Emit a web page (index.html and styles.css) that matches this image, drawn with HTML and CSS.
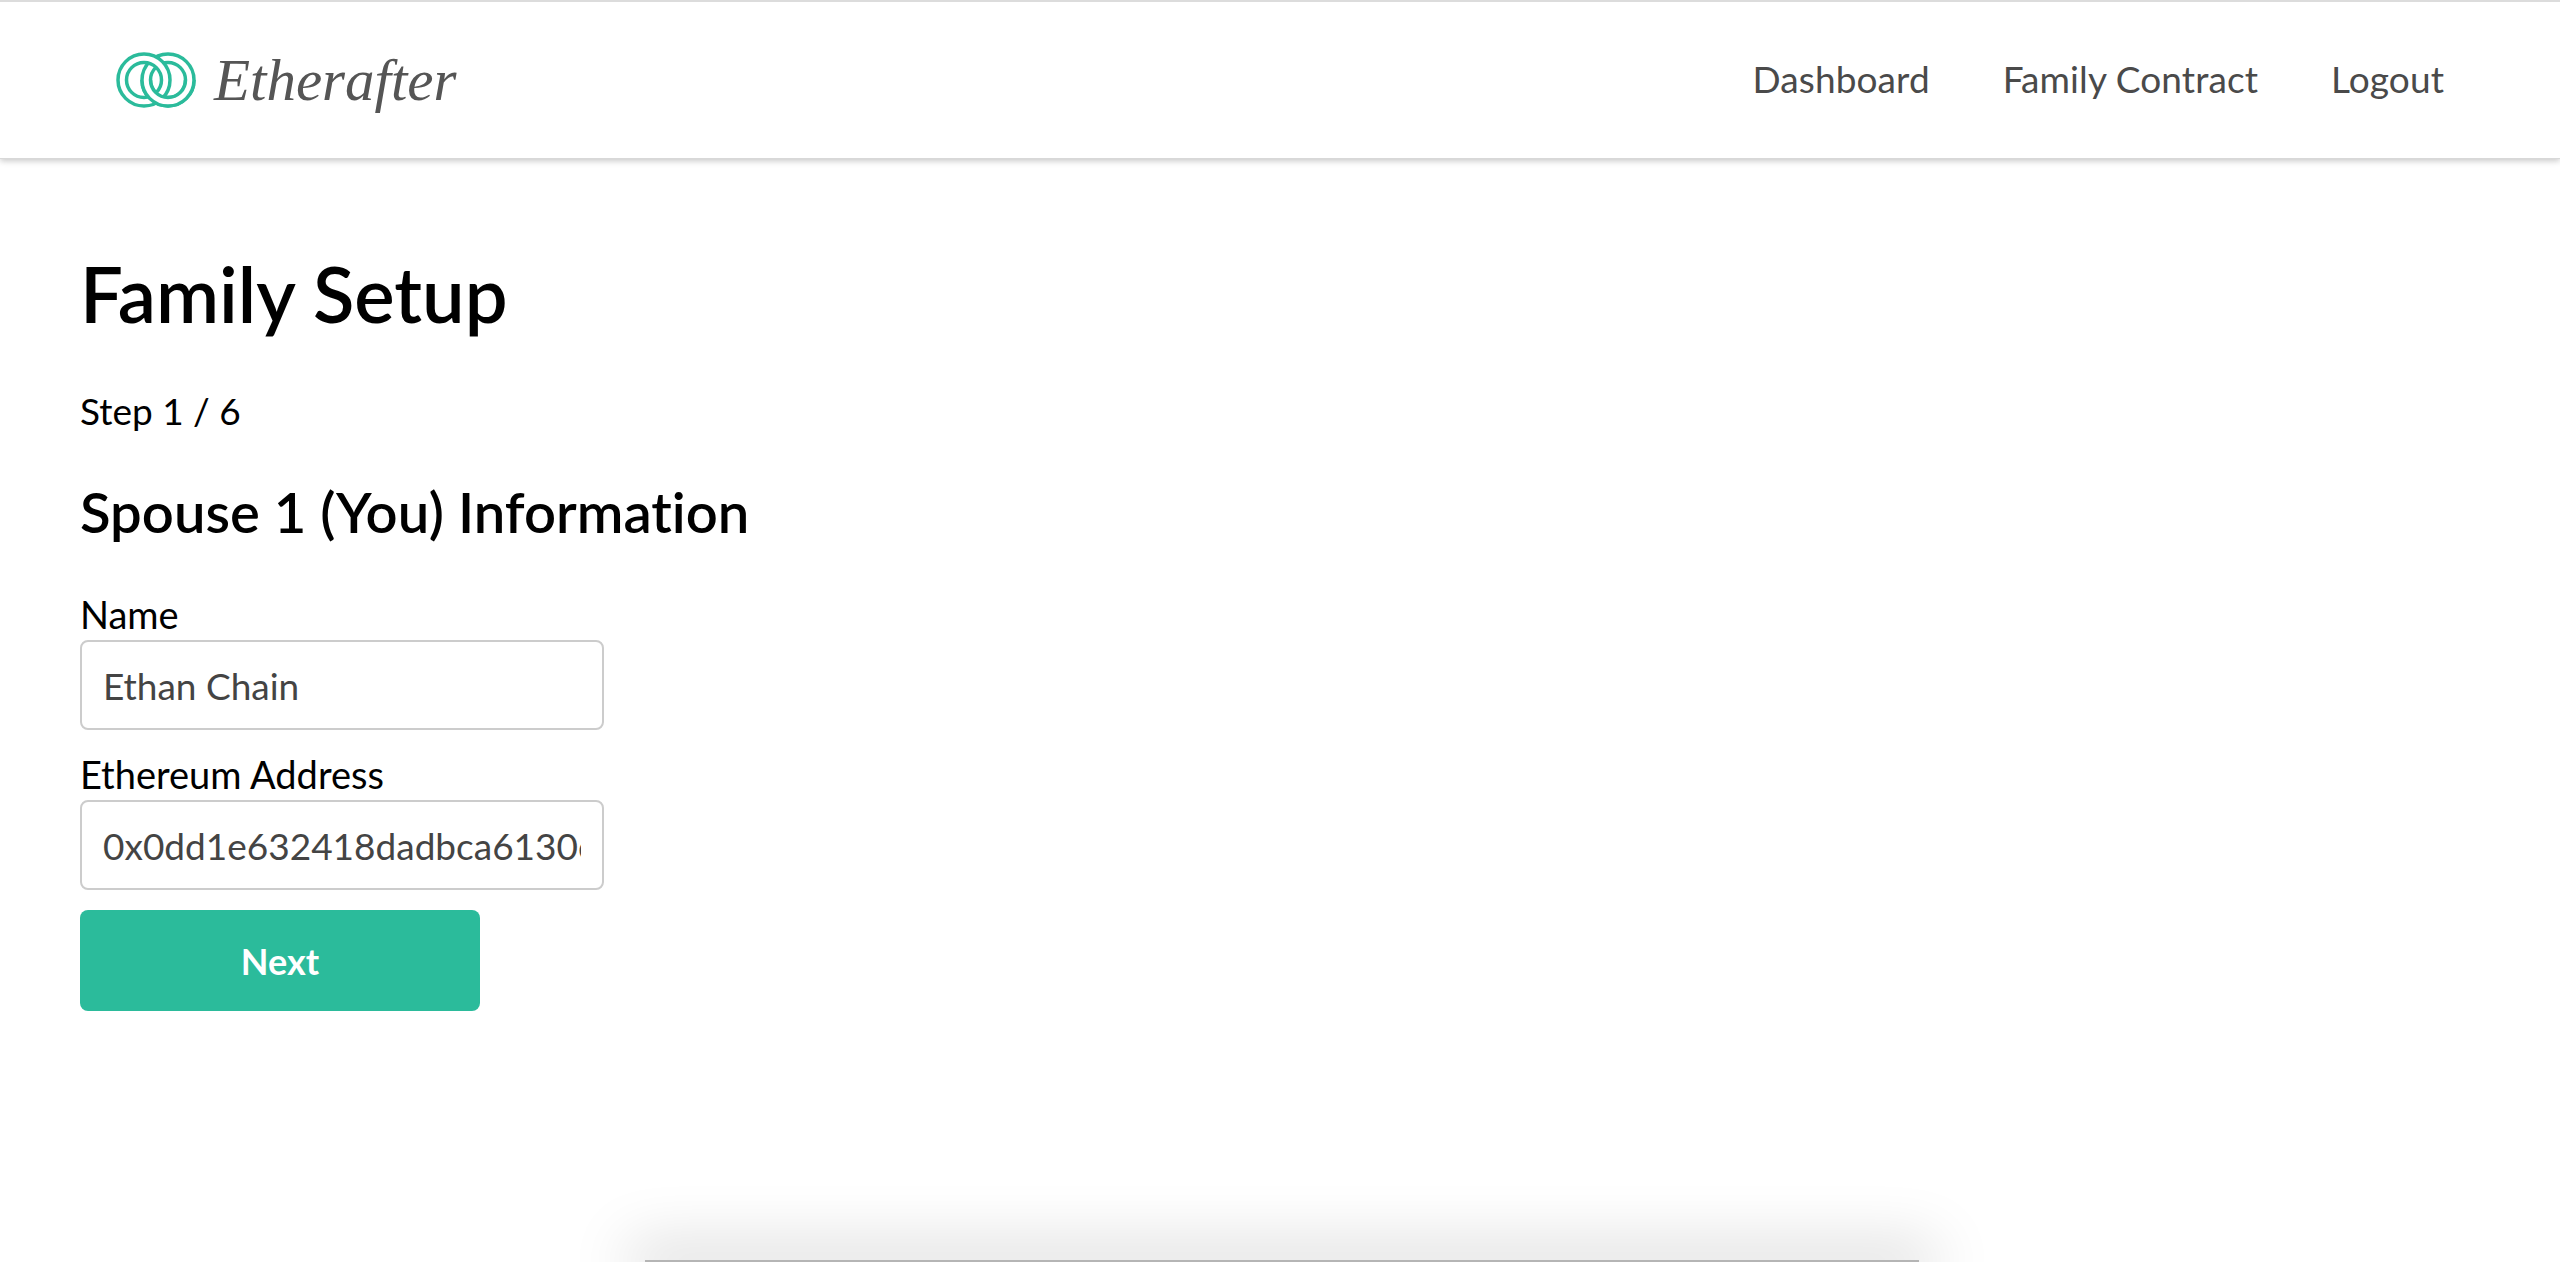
FILE: index.html
```html
<!DOCTYPE html>
<html lang="en">
<head>
<meta charset="utf-8">
<title>Etherafter</title>
<link rel="stylesheet" href="styles.css">
</head>
<body>
<header class="navbar">
  <a class="brand" href="#">
    <svg class="brand-mark" viewBox="0 0 80 56" width="80" height="56" aria-hidden="true">
      <defs>
        <clipPath id="lower"><rect x="0" y="28" width="80" height="28"/></clipPath>
        <g id="ring-r"><circle cx="52" cy="28" r="26"/><circle cx="52" cy="28" r="17.5"/></g>
      </defs>
      <g fill="none" stroke="#2bbb9b" stroke-width="3.5">
        <use href="#ring-r"/>
        <circle cx="28" cy="28" r="21.75" stroke="#fff" stroke-width="8"/>
        <circle cx="28" cy="28" r="26"/>
        <circle cx="28" cy="28" r="17.5"/>
        <g clip-path="url(#lower)">
          <circle cx="52" cy="28" r="21.75" stroke="#fff" stroke-width="8"/>
          <use href="#ring-r"/>
        </g>
      </g>
    </svg>
    <span class="brand-name">Etherafter</span>
  </a>
  <nav class="nav-links">
    <a href="#">Dashboard</a>
    <a href="#">Family Contract</a>
    <a href="#">Logout</a>
  </nav>
</header>
<main class="content">
  <h1 class="title">Family Setup</h1>
  <p class="step">Step 1 / 6</p>
  <h2 class="subtitle">Spouse 1 (You) Information</h2>
  <form class="form">
    <label class="field">
      <span class="field-label">Name</span>
      <input class="field-input" type="text" value="Ethan Chain">
    </label>
    <label class="field">
      <span class="field-label">Ethereum Address</span>
      <input class="field-input" type="text" value="0x0dd1e632418dadbca6130c4f2a91b7">
    </label>
    <button class="next" type="button">Next</button>
  </form>
</main>
<div class="dock-shadow"></div>
</body>
</html>
```
FILE: styles.css
```css
* { box-sizing: border-box; }
html, body { margin: 0; height: 100%; }
body {
  background: #fff;
  color: #000;
  font-family: "Lato", "Noto Sans", sans-serif;
  font-variant-ligatures: none;
  overflow: hidden;
  position: relative;
}
.navbar {
  height: 159px;
  border-top: 2px solid #dcdcdc;
  border-bottom: 1px solid #d8d8d8;
  box-shadow: 0 2px 6px rgba(0,0,0,.22);
  display: flex;
  align-items: center;
  justify-content: space-between;
  padding: 0 116px 0 116px;
}
.brand {
  display: flex;
  align-items: center;
  gap: 18px;
  color: #555;
  text-decoration: none;
}
.brand-name {
  font-family: "Liberation Serif", serif;
  font-style: italic;
  font-size: 59px;
  line-height: 1;
}
.nav-links { display: flex; gap: 73px; margin-top: -3px; }
.nav-links a {
  color: #4a4a4a;
  font-size: 37px;
  letter-spacing: .1px;
  text-decoration: none;
}
.content { padding: 0 80px; }
.title {
  font-size: 76px;
  font-weight: 600;
  line-height: 1;
  margin: 97px 0 0;
}
.step { font-size: 37px; line-height: 1; margin: 60px 0 0; }
.subtitle {
  font-size: 56.2px;
  font-weight: 600;
  line-height: 1;
  margin: 55px 0 0;
}
.form { display: flex; flex-direction: column; align-items: flex-start; margin-top: 49px; }
.field { display: flex; flex-direction: column; }
.field + .field { margin-top: 19px; }
.field-label { font-size: 38px; line-height: 51px; }
.field-input {
  width: 524px;
  height: 90px;
  border: 2px solid #ccc;
  border-radius: 8px;
  padding: 0 21px;
  font: inherit;
  font-size: 37px;
  color: #444;
  background: #fff;
}
.next {
  width: 400px;
  height: 101px;
  margin-top: 20px;
  background: #2bbb9b;
  color: #fff;
  border: 0;
  border-radius: 8px;
  font: inherit;
  font-size: 36px;
  font-weight: 700;
}
.dock-shadow {
  position: absolute;
  left: 645px;
  width: 1274px;
  bottom: 0;
  height: 2px;
  background: #b5b5b5;
  box-shadow: 0 0 60px 16px rgba(0,0,0,.17);
}
```
